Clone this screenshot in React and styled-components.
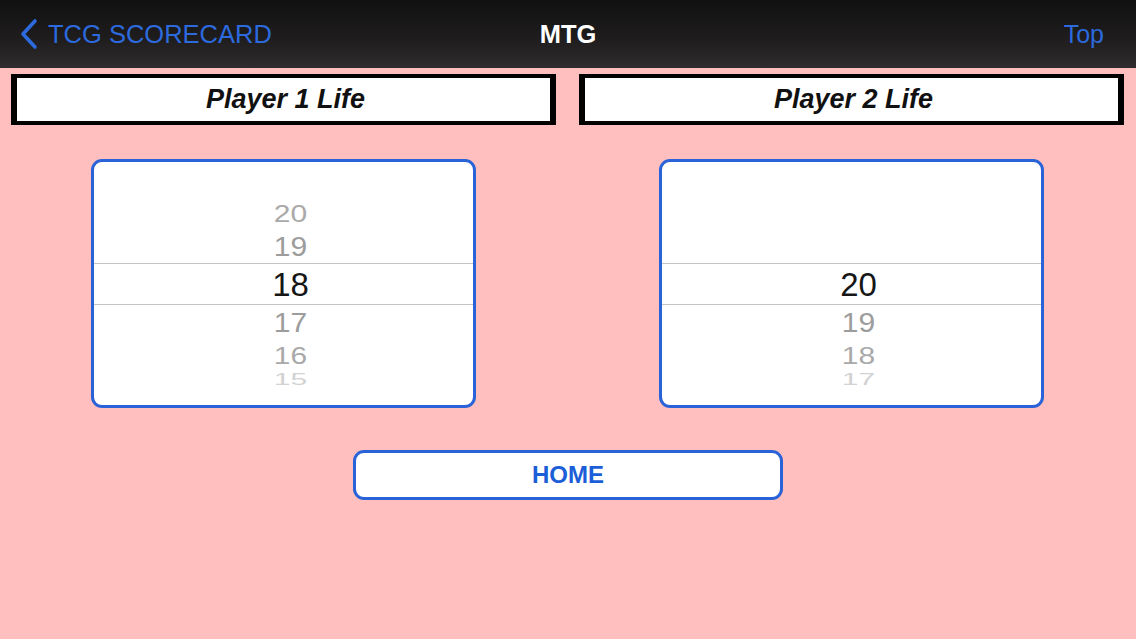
import React from 'react';
import styled, {createGlobalStyle} from 'styled-components';

const GlobalStyle = createGlobalStyle`
html, body {
    margin: 0;
    padding: 0;
    background: #ffbfbf;
}
`;

const Screen = styled.div`
width: 1136px;
height: 639px;
background: #ffbfbf;
font-family: "Liberation Sans", Arial, sans-serif;
display: flex;
flex-direction: column;
overflow: hidden;
`;

const NavBar = styled.div`
height: 68px;
flex-shrink: 0;
background: linear-gradient(to bottom, #111112 0%, #1e1c1d 55%, #2e2c2d 100%);
display: grid;
grid-template-columns: 1fr auto 1fr;
align-items: center;
padding: 0 32px;
`;

const BackButton = styled.div`
display: flex;
align-items: center;
gap: 9px;
margin-left: -13px;
color: #2c6ade;
font-size: 25.5px;
`;

const Title = styled.div`
color: #ffffff;
font-size: 25.5px;
font-weight: bold;
`;

const NavRight = styled.div`
justify-self: end;
color: #2c6ade;
font-size: 25px;
`;

const LabelRow = styled.div`
display: grid;
grid-template-columns: 545px 545px;
column-gap: 23px;
padding: 6px 12px 0 11px;
`;

const LifeLabel = styled.div`
height: 51px;
box-sizing: border-box;
background: #ffffff;
border-style: solid;
border-color: #000000;
border-width: 4px 6px 4px 6px;
display: flex;
align-items: center;
justify-content: center;
padding-left: 4px;
font-size: 27px;
font-weight: bold;
font-style: italic;
color: #111;
`;

const PickerRow = styled.div`
display: grid;
grid-template-columns: 545px 545px;
column-gap: 23px;
padding: 34px 12px 0 11px;
justify-items: center;
`;

const Picker = styled.div`
width: 385px;
height: 249px;
box-sizing: border-box;
background: #ffffff;
border: 3px solid #2a62d8;
border-radius: 11px;
display: flex;
flex-direction: column;
overflow: hidden;
`;

const WheelArea = styled.div`
height: 101px;
flex-shrink: 0;
display: flex;
flex-direction: column;
justify-content: ${p => (p.$top ? 'flex-end' : 'flex-start')};
`;

const Band = styled.div`
height: 42px;
flex-shrink: 0;
border-top: 1px solid #c4c4c4;
border-bottom: 1px solid #c4c4c4;
display: flex;
align-items: center;
justify-content: center;
padding: 2px 0 0 14px;
box-sizing: border-box;
font-size: 33px;
color: #161616;
`;

const WheelItem = styled.div`
height: ${p => p.$h}px;
flex-shrink: 0;
display: flex;
align-items: ${p => (p.$clip ? 'flex-start' : 'center')};
justify-content: center;
padding-left: 14px;
overflow: hidden;
font-size: 30px;
color: ${p => p.$color};
line-height: 1;
span {
    display: inline-block;
    transform: scaleY(${p => p.$scale});
    transform-origin: ${p => (p.$clip ? 'top' : 'center')};
}
`;

const ButtonRow = styled.div`
display: flex;
justify-content: center;
padding: 42px 0 0 0;
`;

const HomeButton = styled.button`
width: 430px;
height: 50px;
box-sizing: border-box;
background: #ffffff;
border: 3px solid #2a62d8;
border-radius: 11px;
color: #1c5ed8;
font-family: "Liberation Sans", Arial, sans-serif;
font-size: 24px;
font-weight: bold;
cursor: pointer;
`;

const Chevron = () => (
    <svg width="20" height="32" viewBox="0 0 20 32">
        <path d="M16 3 L4 16 L16 29" fill="none" stroke="#2c6ade" strokeWidth="3.6" strokeLinecap="round" strokeLinejoin="round" />
    </svg>
);

const Item = ({h, color, scale, clip, children}) => (
    <WheelItem $h={h} $color={color} $scale={scale} $clip={clip}>
        <span>{children}</span>
    </WheelItem>
);

const LifePicker = ({value}) => {
    const above = [value + 2, value + 1].filter(n => n <= 20);
    const aboveStyles = {[value + 2]: {h: 32, color: '#a9a9a9', scale: 0.78}, [value + 1]: {h: 33, color: '#9c9c9c', scale: 0.92}};
    return (
        <Picker>
            <WheelArea $top>
                {above.map(n => (
                    <Item key={n} {...aboveStyles[n]}>{n}</Item>
                ))}
            </WheelArea>
            <Band>{value}</Band>
            <WheelArea>
                <Item h={35} color="#9c9c9c" scale={0.92}>{value - 1}</Item>
                <Item h={31} color="#a9a9a9" scale={0.78}>{value - 2}</Item>
                <Item h={15} color="#d2d2d2" scale={0.55} clip>{value - 3}</Item>
            </WheelArea>
        </Picker>
    );
};

const App = () => {
    return (
        <Screen>
            <GlobalStyle />
            <NavBar>
                <BackButton>
                    <Chevron />
                    TCG SCORECARD
                </BackButton>
                <Title>MTG</Title>
                <NavRight>Top</NavRight>
            </NavBar>
            <LabelRow>
                <LifeLabel>Player 1 Life</LifeLabel>
                <LifeLabel>Player 2 Life</LifeLabel>
            </LabelRow>
            <PickerRow>
                <LifePicker value={18} />
                <LifePicker value={20} />
            </PickerRow>
            <ButtonRow>
                <HomeButton>HOME</HomeButton>
            </ButtonRow>
        </Screen>
    );
};

export default App;
